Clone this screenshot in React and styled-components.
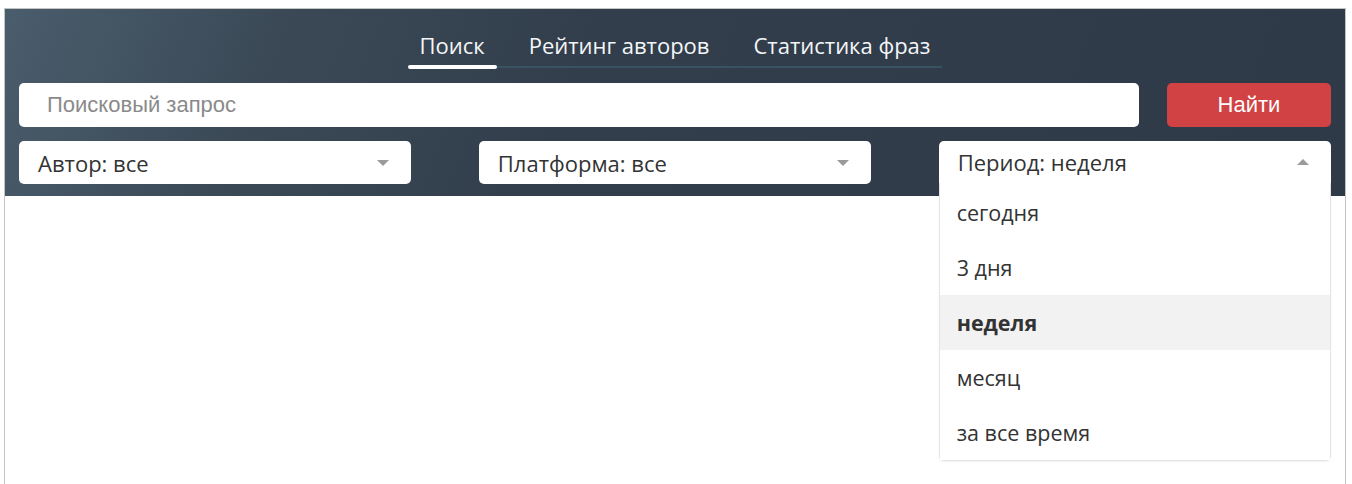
import styled, { createGlobalStyle } from "styled-components";

const GlobalStyle = createGlobalStyle`
  html, body {
    margin: 0;
    padding: 0;
    background: #ffffff;
  }
  body {
    font-family: "Open Sans", "Liberation Sans", sans-serif;
  }
`;

const tabs = ["Поиск", "Рейтинг авторов", "Статистика фраз"];
const periods = ["сегодня", "3 дня", "неделя", "месяц", "за все время"];

const App = () => {
  return (
    <>
      <GlobalStyle />
      <Frame>
        <Header>
          <TabBar>
            <TabTrack>
              {tabs.map((t, i) => (
                <Tab key={t} active={i === 0}>
                  {t}
                </Tab>
              ))}
            </TabTrack>
          </TabBar>

          <SearchRow>
            <SearchInput placeholder="Поисковый запрос" />
            <FindButton>Найти</FindButton>
          </SearchRow>

          <Filters>
            <Select>
              Автор: все
              <Caret />
            </Select>
            <Select>
              Платформа: все
              <Caret />
            </Select>
            <Select open>
              Период: неделя
              <Caret up />
              <Menu>
                {periods.map((p) => (
                  <MenuItem key={p} selected={p === "неделя"}>
                    {p}
                  </MenuItem>
                ))}
              </Menu>
            </Select>
          </Filters>
        </Header>
      </Frame>
    </>
  );
};

const Frame = styled.div`
  margin: 8px 0 0 4px;
  width: 1340px;
  height: 476px;
  border: 1px solid #c4c4c4;
  border-bottom: none;
  background: #fff;
`;

const Header = styled.div`
  background: linear-gradient(112deg, #4a5d6c 0%, #3b4956 20%, #323e4c 42%, #2f3a48 100%);
  padding: 0 14px 12px 14px;
`;

const TabBar = styled.div`
  display: flex;
  justify-content: center;
  padding-top: 22px;
`;

const TabTrack = styled.div`
  display: flex;
  gap: 20px;
  border-bottom: 2px solid #3a5264;
`;

const Tab = styled.div`
  position: relative;
  padding: 0 12px 7px 12px;
  font-size: 22px;
  line-height: 28px;
  color: #f4f6f8;
  &::after {
    content: "";
    display: ${(p) => (p.active ? "block" : "none")};
    position: absolute;
    left: 0;
    right: 0;
    bottom: -3px;
    height: 4px;
    border-radius: 2px;
    background: #ffffff;
  }
`;

const SearchRow = styled.div`
  display: flex;
  gap: 28px;
  margin-top: 15px;
`;

const SearchInput = styled.input`
  flex: 1;
  height: 44px;
  box-sizing: border-box;
  border: none;
  border-radius: 5px;
  padding: 0 28px;
  font-family: "Liberation Sans", Arial, sans-serif;
  font-size: 22px;
  color: #333;
  outline: none;
  &::placeholder {
    color: #8a8a8a;
  }
`;

const FindButton = styled.button`
  width: 164px;
  height: 44px;
  border: none;
  border-radius: 5px;
  background: #d04243;
  color: #ffffff;
  font-family: "Liberation Sans", Arial, sans-serif;
  font-size: 22px;
`;

const Filters = styled.div`
  display: grid;
  grid-template-columns: repeat(3, 1fr);
  column-gap: 67.5px;
  margin-top: 14px;
`;

const Select = styled.div`
  position: relative;
  display: flex;
  align-items: center;
  height: 43px;
  box-sizing: border-box;
  padding: 0 19px;
  background: #fff;
  border-radius: ${(p) => (p.open ? "5px 5px 0 0" : "5px")};
  border-bottom: ${(p) => (p.open ? "1px solid #e2e2e2" : "none")};
  font-size: 22px;
  color: #333;
`;

const Caret = styled.span`
  position: absolute;
  right: 22px;
  top: 50%;
  margin-top: -3px;
  width: 0;
  height: 0;
  border-left: 6px solid transparent;
  border-right: 6px solid transparent;
  ${(p) =>
    p.up
      ? "border-bottom: 6px solid #9a9a9a;"
      : "border-top: 6px solid #9a9a9a;"}
`;

const Menu = styled.div`
  position: absolute;
  top: 100%;
  left: 0;
  right: 0;
  padding-top: 2px;
  background: #fff;
  border: 1px solid #e4e4e4;
  border-top: none;
  border-radius: 0 0 5px 5px;
  box-shadow: 0 1px 2px rgba(0, 0, 0, 0.06);
  z-index: 10;
`;

const MenuItem = styled.div`
  height: 55px;
  display: flex;
  align-items: center;
  padding-left: 17px;
  font-size: 21.5px;
  color: #333;
  font-weight: ${(p) => (p.selected ? 700 : 400)};
  background: ${(p) => (p.selected ? "#f2f2f2" : "#fff")};
`;

export default App;
